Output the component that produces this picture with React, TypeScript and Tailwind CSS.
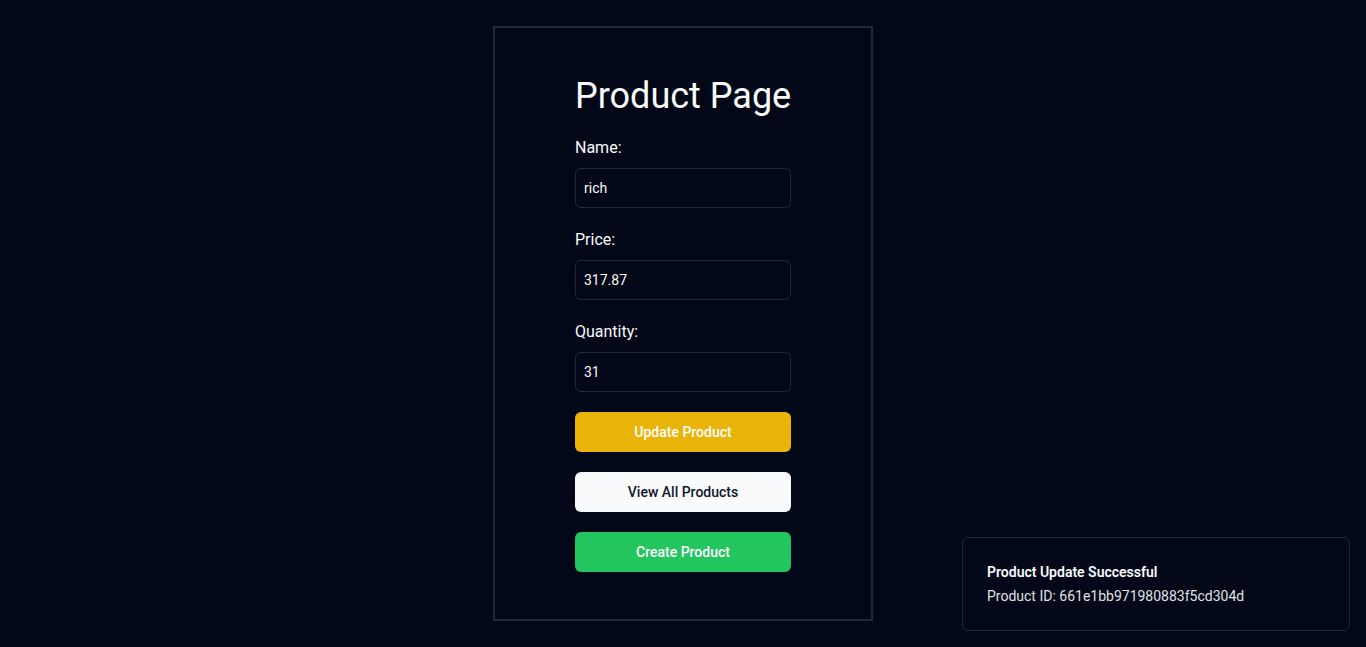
import React from "react";

export default function App() {
    return (
        <div
            className="relative w-full h-[647px] bg-[#020817] text-[#f8fafc] flex items-center justify-center overflow-hidden"
            style={{ fontFamily: "Roboto, 'Liberation Sans', sans-serif" }}
        >
            {/* Product form card */}
            <main className="w-[380px] h-[595px] border-2 border-[#1e293b] flex justify-center pt-12">
                <form className="w-[216px] flex flex-col">
                    <h1 className="text-4xl leading-10 mb-5 whitespace-nowrap">Product Page</h1>

                    <label className="text-base leading-6 mb-2">Name:</label>
                    <input
                        className="h-10 w-full rounded-md border border-[#1e293b] bg-transparent px-2 text-sm outline-none"
                        type="text"
                        defaultValue="rich"
                    />

                    <label className="text-base leading-6 mt-5 mb-2">Price:</label>
                    <input
                        className="h-10 w-full rounded-md border border-[#1e293b] bg-transparent px-2 text-sm outline-none"
                        type="text"
                        defaultValue="317.87"
                    />

                    <label className="text-base leading-6 mt-5 mb-2">Quantity:</label>
                    <input
                        className="h-10 w-full rounded-md border border-[#1e293b] bg-transparent px-2 text-sm outline-none"
                        type="text"
                        defaultValue="31"
                    />

                    <section className="flex flex-col gap-5 mt-5">
                        <button
                            type="button"
                            className="h-10 w-full rounded-md bg-[#eab308] text-white text-sm font-medium"
                        >
                            Update Product
                        </button>
                        <button
                            type="button"
                            className="h-10 w-full rounded-md bg-[#f8fafc] text-[#0f172a] text-sm font-medium"
                        >
                            View All Products
                        </button>
                        <button
                            type="button"
                            className="h-10 w-full rounded-md bg-[#22c55e] text-white text-sm font-medium"
                        >
                            Create Product
                        </button>
                    </section>
                </form>
            </main>

            {/* Toast */}
            <div className="absolute right-4 bottom-4 w-[388px] rounded-md border border-[#1e293b] p-6 pr-8 flex flex-col gap-1">
                <span className="text-sm font-semibold leading-5">Product Update Successful</span>
                <span className="text-sm leading-5 opacity-90">Product ID: 661e1bb971980883f5cd304d</span>
            </div>
        </div>
    );
}
